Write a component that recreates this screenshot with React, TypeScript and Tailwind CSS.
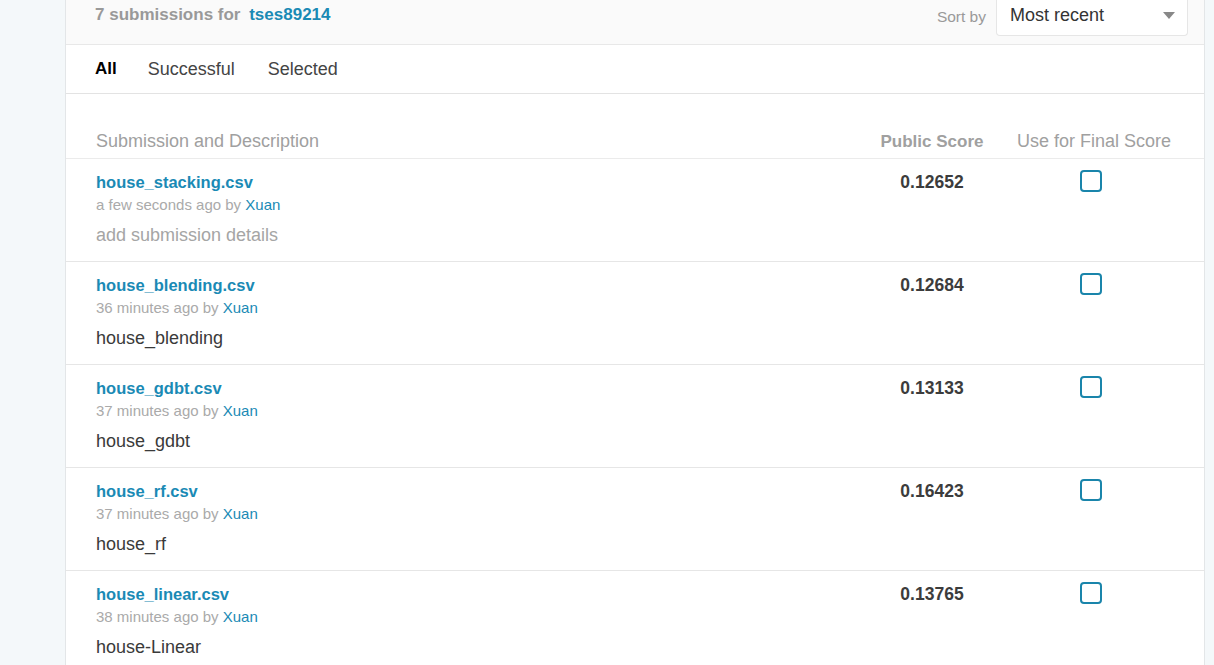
const rows = [
  { file: 'house_stacking.csv', time: 'a few seconds ago', desc: 'add submission details', placeholder: true, score: '0.12652' },
  { file: 'house_blending.csv', time: '36 minutes ago', desc: 'house_blending', placeholder: false, score: '0.12684' },
  { file: 'house_gdbt.csv', time: '37 minutes ago', desc: 'house_gdbt', placeholder: false, score: '0.13133' },
  { file: 'house_rf.csv', time: '37 minutes ago', desc: 'house_rf', placeholder: false, score: '0.16423' },
  { file: 'house_linear.csv', time: '38 minutes ago', desc: 'house-Linear', placeholder: false, score: '0.13765' },
];

const App = () => {
  return (
    <div className="flex h-[665px] overflow-hidden bg-[#f4f8fa] font-['Liberation_Sans',Arial,sans-serif]">
      <div className="ml-[65px] w-[1140px] border-x border-[#e3e6e8] bg-white">
        <div className="flex h-[45px] items-start border-b border-[#e8e8e8] bg-[#fafafa] pl-[29px] pr-[16px]">
          <p className="mt-[2px] flex-1 text-[17px] font-bold text-[#999]">
            7 submissions for <span className="ml-1 text-[#1a8ab5]">tses89214</span>
          </p>
          <span className="mt-[5px] mr-[10px] text-[15.5px] text-[#999]">Sort by</span>
          <div className="flex h-[36px] w-[192px] items-center justify-between rounded-b-[4px] border border-t-0 border-[#e6e6e6] bg-white pl-[13px] pr-[12px]">
            <span className="-mt-[5px] text-[18px] text-[#333]">Most recent</span>
            <svg width="12" height="7" viewBox="0 0 12 7" className="-mt-[5px]"><path d="M0 0h12L6 7z" fill="#888" /></svg>
          </div>
        </div>
        <div className="flex h-[49px] items-center border-b border-[#e3e3e3] pl-[29px] text-[18px]">
          <span className="text-[17px] font-bold text-black">All</span>
          <span className="ml-[31px] text-[#444]">Successful</span>
          <span className="ml-[33px] text-[#444]">Selected</span>
        </div>
        <div className="flex h-[65px] items-baseline border-b border-[#ebebeb] pl-[30px] pt-[37px] text-[18px] leading-[21px] text-[#a0a0a0]">
          <span className="flex-1">Submission and Description</span>
          <span className="w-[124px] text-center text-[17px] font-bold">Public Score</span>
          <span className="ml-[10px] mr-[20px] w-[180px] text-center">Use for Final Score</span>
        </div>
        {rows.map((row) => (
          <div key={row.file} className="flex h-[103px] border-b border-[#e6e6e6] pl-[30px] pt-[12px]">
            <div className="flex-1">
              <p className="text-[16.5px] font-bold leading-[22px] text-[#1a8ab5]">{row.file}</p>
              <p className="mt-[1px] text-[15px] leading-[22px] text-[#aaa]">
                {row.time} by <span className="text-[#1a8ab5]">Xuan</span>
              </p>
              <p className={`mt-[7px] text-[18px] leading-[24px] ${row.placeholder ? 'text-[#a5a5a5]' : 'text-[#3a3a3a]'}`}>{row.desc}</p>
            </div>
            <div className="w-[124px] text-center text-[17.5px] font-bold leading-[22px] text-[#3c3c3c]">{row.score}</div>
            <div className="ml-[10px] mr-[20px] flex w-[180px] justify-center pr-[6px]">
              <div className="-mt-[1px] h-[22px] w-[22px] rounded-[4px] border-2 border-[#1a85ab]" />
            </div>
          </div>
        ))}
      </div>
    </div>
  );
};

export default App;
